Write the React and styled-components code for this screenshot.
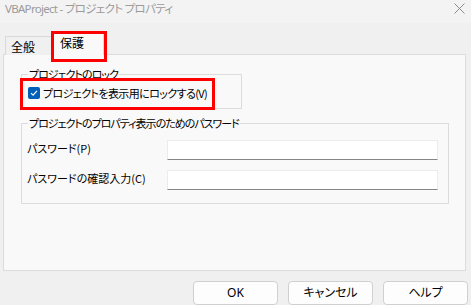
import React from "react"
import styled, { createGlobalStyle } from "styled-components"

const GlobalStyle = createGlobalStyle`
    html, body {
        margin: 0;
        padding: 0;
        background: #f0f0f0;
    }
    body {
        font-family: "Noto Sans", "Noto Sans CJK JP", sans-serif;
        font-size: 12px;
        color: #000;
    }
`

const Window = styled.div`
    width: 471px;
    height: 305px;
    overflow: hidden;
    background: #f0f0f0;
    display: flex;
    flex-direction: column;
`

const TitleBar = styled.div`
    height: 23px;
    background: #f3f3f3;
    display: flex;
    align-items: flex-start;
    justify-content: space-between;
    padding: 1px 6px 0 5px;
    box-sizing: border-box;
    flex-shrink: 0;
`

const Title = styled.span`
    font-family: "Noto Sans", "Noto Sans CJK JP", sans-serif;
    font-size: 11.5px;
    line-height: 15px;
    letter-spacing: -0.7px;
    color: #9b9b9b;
    font-feature-settings: "palt";
    white-space: nowrap;
`

const CloseButton = styled.span`
    display: flex;
    margin-top: 2px;
`

const TabStrip = styled.div`
    display: flex;
    align-items: flex-end;
    padding-left: 5px;
    margin-top: 10px;
    height: 22px;
    position: relative;
    z-index: 2;
`

const Tab = styled.div`
    position: relative;
    box-sizing: border-box;
    height: ${p => (p.$active ? "22px" : "19px")};
    width: ${p => (p.$active ? "53px" : "47px")};
    margin-left: ${p => (p.$active ? "-1px" : "0")};
    padding: ${p => (p.$active ? "1px 0 0 8px" : "2px 0 0 5px")};
    border: 1px solid #d9d9d9;
    border-bottom: none;
    background: ${p => (p.$active ? "#f9f9f9" : "#f0f0f0")};
    font-family: "Noto Sans CJK JP", sans-serif;
    font-size: 12px;
    line-height: 15px;

    ${p => p.$marked && `
        &::after {
            content: "";
            position: absolute;
            top: -3px;
            left: -1px;
            width: 56px;
            height: 31px;
            box-sizing: border-box;
            border: 3px solid #ff0000;
        }
    `}
`

const Panel = styled.div`
    margin: -1px 5px 0 3px;
    height: 218px;
    box-sizing: border-box;
    border: 1px solid #dcdcdc;
    background: #f9f9f9;
    padding: 12px 0 0 17px;
    position: relative;
    z-index: 1;
`

const GroupBox = styled.fieldset`
    margin: ${p => p.$gap || 0}px 0 0 0;
    padding: 0;
    min-width: 0;
    width: ${p => p.$width}px;
    height: ${p => p.$height}px;
    box-sizing: border-box;
    border: 1px solid #dcdcdc;
    font-family: "Noto Sans CJK JP", sans-serif;
    font-size: 11px;
    font-feature-settings: "palt";
`

const Legend = styled.legend`
    margin-left: 6px;
    padding: 0 1px;
    line-height: 14px;
    letter-spacing: -1px;
    white-space: nowrap;
`

const CheckRow = styled.label`
    position: relative;
    display: flex;
    align-items: center;
    gap: 3px;
    margin: 5px 0 0 6px;
    height: 14px;
    letter-spacing: -0.6px;
    white-space: nowrap;

    &::after {
        content: "";
        position: absolute;
        top: -8px;
        left: -8px;
        width: 195px;
        height: 32px;
        box-sizing: border-box;
        border: 3px solid #ff0000;
    }
`

const CheckBox = styled.span`
    width: 12px;
    height: 12px;
    border-radius: 2px;
    background: #005fb8;
    display: flex;
    align-items: center;
    justify-content: center;
    flex-shrink: 0;
`

const FieldRow = styled.div`
    display: flex;
    align-items: flex-start;
    margin: ${p => p.$top}px 0 0 5px;
`

const FieldLabel = styled.span`
    width: 140px;
    flex-shrink: 0;
    margin-top: 1px;
    line-height: 14px;
    letter-spacing: 0;
    white-space: nowrap;
`

const TextInput = styled.input`
    width: 271px;
    height: 20px;
    box-sizing: border-box;
    margin: 0;
    border: 1px solid #ececec;
    border-bottom: 1px solid #868686;
    background: #fff;
    outline: none;
`

const Footer = styled.div`
    display: flex;
    justify-content: flex-end;
    gap: 10px;
    margin-top: 10px;
    padding-right: 3px;
`

const Button = styled.button`
    width: 85px;
    height: 24px;
    box-sizing: border-box;
    border: 1px solid #d0d0d0;
    border-radius: 4px;
    background: #fdfdfd;
    font-family: "Noto Sans", "Noto Sans CJK JP", sans-serif;
    font-size: 12px;
    color: #000;
    padding: 0 0 2px;
    font-feature-settings: "palt";
`

export default function App() {
    return (
        <Window>
            <GlobalStyle />
            <TitleBar>
                <Title>VBAProject - プロジェクト プロパティ</Title>
                <CloseButton>
                    <svg width="11" height="11" viewBox="0 0 11 11">
                        <path d="M0.5 0.5 L10.5 10.5 M10.5 0.5 L0.5 10.5" stroke="#8c8c8c" strokeWidth="1" fill="none" />
                    </svg>
                </CloseButton>
            </TitleBar>

            <TabStrip>
                <Tab>全般</Tab>
                <Tab $active $marked>保護</Tab>
            </TabStrip>

            <Panel>
                <GroupBox $width={221} $height={42}>
                    <Legend>プロジェクトのロック</Legend>
                    <CheckRow>
                        <CheckBox>
                            <svg width="8" height="8" viewBox="0 0 8 8">
                                <path d="M1 4.2 L3.1 6.2 L7 1.8" stroke="#fff" strokeWidth="1.1" fill="none" />
                            </svg>
                        </CheckBox>
                        プロジェクトを表示用にロックする(V)
                    </CheckRow>
                </GroupBox>

                <GroupBox $width={428} $height={88} $gap={7}>
                    <Legend>プロジェクトのプロパティ表示のためのパスワード</Legend>
                    <FieldRow $top={10}>
                        <FieldLabel>パスワード(P)</FieldLabel>
                        <TextInput type="password" />
                    </FieldRow>
                    <FieldRow $top={10}>
                        <FieldLabel>パスワードの確認入力(C)</FieldLabel>
                        <TextInput type="password" />
                    </FieldRow>
                </GroupBox>
            </Panel>

            <Footer>
                <Button>OK</Button>
                <Button>キャンセル</Button>
                <Button>ヘルプ</Button>
            </Footer>
        </Window>
    )
}
